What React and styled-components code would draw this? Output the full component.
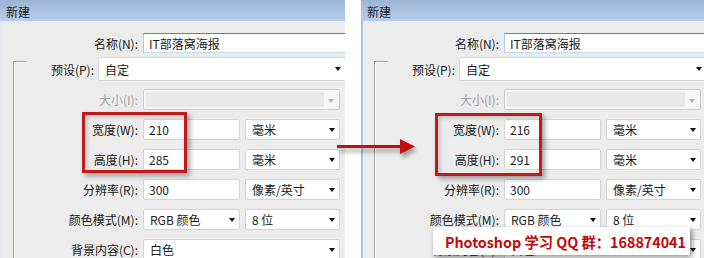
import React from "react";
import styled, { createGlobalStyle } from "styled-components";

const Global = createGlobalStyle`
  html, body { margin: 0; padding: 0; background: #fff; }
  body { font-family: "Noto Sans CJK SC", "Noto Sans", sans-serif; }
`;

const Page = styled.div`
  position: relative;
  display: flex;
  gap: 16px;
  width: 704px;
  height: 258px;
  overflow: hidden;
  background: #fff;
`;

const Dialog = styled.section`
  position: relative;
  flex: 0 0 ${(p) => p.$w}px;
  width: ${(p) => p.$w}px;
  display: flex;
  flex-direction: column;
  overflow: hidden;
`;

const TitleBar = styled.header`
  flex: 0 0 21px;
  box-sizing: border-box;
  padding: 3px 0 0 6px;
  background: linear-gradient(#9db5d4, #b6cdea);
  color: #1b1b1b;
  font-size: 12px;
  line-height: 17px;
`;

const Body = styled.div`
  flex: 1;
  box-sizing: border-box;
  background: #ececec;
  border-left: 2px solid ${(p) => (p.$frame ? "#a9c3e3" : "#e4e9f0")};
  padding-top: 12px;
  display: flex;
  flex-direction: column;
  font-size: 12px;
  color: #1a1a1a;
`;

const Row = styled.div`
  display: grid;
  grid-template-columns: ${(p) => p.$cols};
  column-gap: ${(p) => p.$gap ?? 5}px;
  align-items: center;
  height: ${(p) => p.$h}px;
  margin-top: ${(p) => p.$mt ?? 0}px;
  white-space: nowrap;
`;

const Label = styled.span`
  text-align: right;
  color: ${(p) => (p.$disabled ? "#a2a2a2" : "#1a1a1a")};
`;

const Group = styled.div`
  position: relative;
  display: flex;
  flex-direction: column;
  &::before {
    content: "";
    position: absolute;
    left: 11px;
    top: 8px;
    width: 13px;
    height: 400px;
    border-left: 1px solid #a3a3a3;
    border-top: 1px solid #a3a3a3;
    box-shadow: inset 1px 1px 0 #fff;
  }
`;

const Box = styled.div`
  position: relative;
  box-sizing: border-box;
  height: 100%;
  display: flex;
  align-items: center;
  padding: 0 0 0 5px;
  background: #fff;
  border: 1px solid #d4d4d4;
  border-radius: 2px;
`;

const FocusBox = styled(Box)`
  border-color: #a9c9e4 #b9d3ea #c2dbef #a9c9e4;
  border-top-color: #4c86bc;
  border-radius: 0;
`;

const DisabledBox = styled(Box)`
  background: #f6f6f6;
  border-color: #cdcdcd;
  padding: 2px;
  &::after {
    content: "";
    position: absolute;
    right: 5px;
    top: 9px;
    border-left: 3.5px solid transparent;
    border-right: 3.5px solid transparent;
    border-top: 4px solid #b3b3b3;
  }
`;

const DisabledInner = styled.div`
  height: 100%;
  width: 178px;
  background: #e9e9e9;
`;

const SelectBox = styled(Box)`
  padding-left: 6px;
  &::after {
    content: "";
    position: absolute;
    right: 4px;
    top: 50%;
    margin-top: -2px;
    border-left: 3.5px solid transparent;
    border-right: 3.5px solid transparent;
    border-top: 4px solid #111;
  }
`;

const RedFrame = styled.div`
  position: absolute;
  left: ${(p) => p.$x}px;
  top: ${(p) => p.$y}px;
  width: ${(p) => p.$w}px;
  height: ${(p) => p.$h}px;
  box-sizing: border-box;
  border: 3px solid #c11a1a;
  box-shadow: 3px 3px 5px rgba(0, 0, 0, 0.35), inset 2px 2px 4px rgba(0, 0, 0, 0.18);
  pointer-events: none;
`;

const Arrow = styled.svg`
  position: absolute;
  left: 335px;
  top: 135px;
  overflow: visible;
`;

const Badge = styled.div`
  position: absolute;
  left: 433px;
  top: 227px;
  width: 257px;
  height: 28px;
  box-sizing: border-box;
  display: flex;
  align-items: center;
  justify-content: flex-end;
  padding-right: 4px;
  background: #fff;
  box-shadow: 2px 2px 5px rgba(0, 0, 0, 0.45);
  color: #c00a0a;
  font-family: "Noto Sans CJK SC", "Noto Sans", sans-serif;
  font-weight: 700;
  font-size: 14.3px;
  white-space: nowrap;
`;

function NewDialog({ w, frame, width, height, frameBox }) {
  return (
    <Dialog $w={w}>
      <TitleBar>新建</TitleBar>
      <Body $frame={frame}>
        <Row $cols="136px 260px" $h={20}>
          <Label>名称(N):</Label>
          <FocusBox>IT部落窝海报</FocusBox>
        </Row>
        <Group>
          <Row $cols="92px 260px" $gap={4} $h={24} $mt={4}>
            <Label>预设(P):</Label>
            <SelectBox style={{ width: 248 }}>自定</SelectBox>
          </Row>
          <Row $cols="136px 197px" $h={21} $mt={8}>
            <Label $disabled>大小(I):</Label>
            <DisabledBox>
              <DisabledInner />
            </DisabledBox>
          </Row>
          <Row $cols="136px 97px 95px" $h={21} $mt={9}>
            <Label>宽度(W):</Label>
            <Box>{width}</Box>
            <SelectBox>毫米</SelectBox>
          </Row>
          <Row $cols="136px 97px 95px" $h={21} $mt={9}>
            <Label>高度(H):</Label>
            <Box>{height}</Box>
            <SelectBox>毫米</SelectBox>
          </Row>
          <Row $cols="136px 97px 95px" $h={21} $mt={9}>
            <Label>分辨率(R):</Label>
            <Box>300</Box>
            <SelectBox>像素/英寸</SelectBox>
          </Row>
          <Row $cols="136px 93px 95px" $gap={5} $h={21} $mt={9}>
            <Label>颜色模式(M):</Label>
            <SelectBox style={{ marginRight: -4 }}>RGB 颜色</SelectBox>
            <SelectBox style={{ marginLeft: 4, width: 95 }}>8 位</SelectBox>
          </Row>
          <Row $cols="136px 197px" $h={21} $mt={9}>
            <Label>背景内容(C):</Label>
            <SelectBox>白色</SelectBox>
          </Row>
        </Group>
      </Body>
      <RedFrame $x={frameBox[0]} $y={frameBox[1]} $w={frameBox[2]} $h={frameBox[3]} />
    </Dialog>
  );
}

export default function App() {
  return (
    <>
      <Global />
      <Page>
        <NewDialog w={345} width="210" height="285" frameBox={[82, 112, 105, 61]} />
        <NewDialog w={400} frame width="216" height="291" frameBox={[74, 113, 107, 63]} />
        <Arrow width="80" height="24" viewBox="0 0 80 24">
          <defs>
            <filter id="sh" x="-20%" y="-50%" width="140%" height="220%">
              <feGaussianBlur stdDeviation="2" />
            </filter>
          </defs>
          <g fill="rgba(0,0,0,0.35)" filter="url(#sh)" transform="translate(2,4)">
            <rect x="2" y="10" width="64" height="3" />
            <polygon points="65,4 80,11.5 65,19" />
          </g>
          <rect x="2" y="10" width="64" height="3" fill="#c40d0d" />
          <polygon points="65,4 80,11.5 65,19" fill="#c40d0d" />
        </Arrow>
        <Badge>Photoshop 学习 QQ 群：168874041</Badge>
      </Page>
    </>
  );
}
